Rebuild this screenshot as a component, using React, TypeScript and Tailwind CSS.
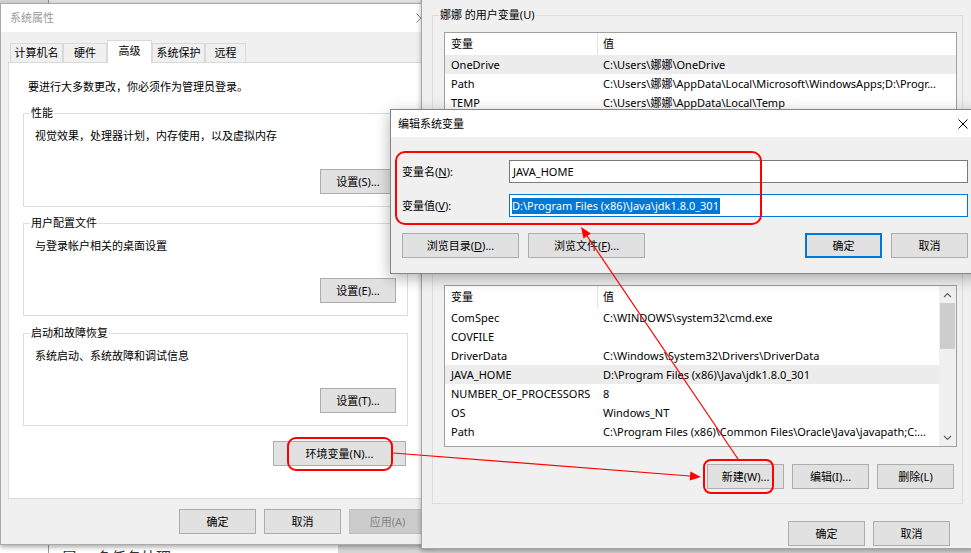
import React from "react";

type Row = { name: string; value: string; active?: boolean };

const userVars: Row[] = [
  { name: "OneDrive", value: "C:\\Users\\娜娜\\OneDrive", active: true },
  { name: "Path", value: "C:\\Users\\娜娜\\AppData\\Local\\Microsoft\\WindowsApps;D:\\Progr..." },
  { name: "TEMP", value: "C:\\Users\\娜娜\\AppData\\Local\\Temp" },
];

const systemVars: Row[] = [
  { name: "ComSpec", value: "C:\\WINDOWS\\system32\\cmd.exe" },
  { name: "COVFILE", value: "" },
  { name: "DriverData", value: "C:\\Windows\\System32\\Drivers\\DriverData" },
  { name: "JAVA_HOME", value: "D:\\Program Files (x86)\\Java\\jdk1.8.0_301", active: true },
  { name: "NUMBER_OF_PROCESSORS", value: "8" },
  { name: "OS", value: "Windows_NT" },
  { name: "Path", value: "C:\\Program Files (x86)\\Common Files\\Oracle\\Java\\javapath;C:..." },
];

const tabs = [
  { label: "计算机名", width: "w-[53px]" },
  { label: "硬件", width: "w-[44px]" },
  { label: "高级", width: "w-[45px]", active: true },
  { label: "系统保护", width: "w-[53px]" },
  { label: "远程", width: "w-[41px]" },
];

function CloseIcon({ className = "" }: { className?: string }) {
  return (
    <svg viewBox="0 0 10 10" className={className}>
      <path d="M0.5 0.5 9.5 9.5 M9.5 0.5 0.5 9.5" stroke="currentColor" strokeWidth="1" fill="none" />
    </svg>
  );
}

function Button({
  children,
  className = "",
  variant = "normal",
}: {
  children: React.ReactNode;
  className?: string;
  variant?: "normal" | "default" | "disabled";
}) {
  const look =
    variant === "default"
      ? "border-2 border-[#0078d7] bg-[#e1e1e1] text-black"
      : variant === "disabled"
        ? "border border-[#bfbfbf] bg-[#cccccc] text-[#838383]"
        : "border border-[#adadad] bg-[#e1e1e1] text-black";
  return (
    <div className={`flex h-[25px] shrink-0 items-center justify-center whitespace-nowrap text-[11px] ${look} ${className}`}>
      {children}
    </div>
  );
}

function GroupBox({
  label,
  labelBg,
  className = "",
  children,
}: {
  label: string;
  labelBg: string;
  className?: string;
  children: React.ReactNode;
}) {
  return (
    <div className={`relative shrink-0 border border-[#dcdcdc] ${className}`}>
      <span className={`absolute -top-[9px] left-[6px] px-[1px] leading-[16px] whitespace-nowrap ${labelBg}`}>{label}</span>
      {children}
    </div>
  );
}

function Scrollbar() {
  return (
    <div className="flex w-[17px] shrink-0 flex-col bg-[#f0f0f0]">
      <div className="flex h-[17px] items-center justify-center">
        <svg width="9" height="6" viewBox="0 0 9 6">
          <path d="M1 5 4.5 1.5 8 5" stroke="#606060" strokeWidth="1.1" fill="none" />
        </svg>
      </div>
      <div className="mx-[1px] h-[46px] bg-[#cdcdcd]" />
      <div className="mt-auto flex h-[17px] items-center justify-center">
        <svg width="9" height="6" viewBox="0 0 9 6">
          <path d="M1 1 4.5 4.5 8 1" stroke="#606060" strokeWidth="1.1" fill="none" />
        </svg>
      </div>
    </div>
  );
}

function VarList({ rows, className = "", scroll = false }: { rows: Row[]; className?: string; scroll?: boolean }) {
  return (
    <div className={`flex w-[513px] shrink-0 overflow-hidden border border-[#a0a0a0] bg-white ${className}`}>
      <div className="flex min-w-0 flex-1 flex-col">
        <div className="flex h-[22px] shrink-0 items-center">
          <div className="flex h-full w-[153px] shrink-0 items-center border-r border-[#e5e5e5] pl-[6px]">变量</div>
          <div className="pl-[5px]">值</div>
        </div>
        {rows.map((row) => (
          <div
            key={row.name}
            className={`flex h-[19px] shrink-0 items-center whitespace-nowrap ${row.active ? "bg-[#ececec]" : ""}`}
          >
            <div className="w-[153px] shrink-0 overflow-hidden pl-[6px]">{row.name}</div>
            <div className="min-w-0 flex-1 overflow-hidden pl-[5px]">{row.value}</div>
          </div>
        ))}
      </div>
      {scroll && <Scrollbar />}
    </div>
  );
}

function SystemProperties() {
  const groups = [
    { label: "性能", text: "视觉效果，处理器计划，内存使用，以及虚拟内存", button: "设置(S)...", gap: "mt-[18px]" },
    { label: "用户配置文件", text: "与登录帐户相关的桌面设置", button: "设置(E)...", gap: "mt-[16px]" },
    { label: "启动和故障恢复", text: "系统启动、系统故障和调试信息", button: "设置(T)...", gap: "mt-[17px]" },
  ];
  return (
    <div className="absolute left-0 top-[3px] flex h-[542px] w-[436px] flex-col border border-[#aaaaaa] bg-[#f0f0f0] shadow-[0_2px_5px_rgba(0,0,0,0.35)]">
      <div className="flex h-[28px] shrink-0 items-center justify-between bg-white px-[9px]">
        <span className="text-[#9a9a9a]">系统属性</span>
        <CloseIcon className="h-[10px] w-[10px] text-[#8a8a8a]" />
      </div>
      <div className="flex h-[30px] shrink-0 items-end pl-[9px]">
        {tabs.map((tab) =>
          tab.active ? (
            <div
              key={tab.label}
              className={`relative z-10 -mb-px flex h-[23px] items-center justify-center border border-b-0 border-[#d9d9d9] bg-white pb-[2px] ${tab.width}`}
            >
              {tab.label}
            </div>
          ) : (
            <div
              key={tab.label}
              className={`flex h-[19px] items-center justify-center border border-b-0 border-[#d9d9d9] bg-[#f0f0f0] ${tab.width}`}
            >
              {tab.label}
            </div>
          ),
        )}
      </div>
      <div className="mx-[7px] flex h-[437px] w-[420px] shrink-0 flex-col border border-[#d9d9d9] bg-white pl-[14px] pt-[16px]">
        <p className="pl-[5px]">要进行大多数更改，你必须作为管理员登录。</p>
        {groups.map((g, i) => (
          <GroupBox
            key={g.label}
            label={g.label}
            labelBg="bg-white"
            className={`flex w-[385px] flex-col pb-[12px] pl-[11px] pr-[11px] pt-[14px] ${g.gap} ${i === 0 ? "h-[94px]" : "h-[93px]"}`}
          >
            <p>{g.text}</p>
            <Button className="mt-auto w-[76px] self-end">{g.button}</Button>
          </GroupBox>
        ))}
        <Button className="ml-[250px] mt-[15px] w-[133px]">环境变量(N)...</Button>
      </div>
      <div className="mt-[10px] flex gap-[8px] pl-[178px]">
        <Button className="w-[77px]">确定</Button>
        <Button className="w-[77px]">取消</Button>
        <Button className="w-[77px]" variant="disabled">应用(A)</Button>
      </div>
    </div>
  );
}

function EnvironmentVariables() {
  return (
    <div className="absolute left-[421px] top-0 flex h-[549px] w-[555px] flex-col border-b border-l border-[#a5a5a5] bg-[#f0f0f0] pl-[10px] pt-[15px] shadow-[0_2px_5px_rgba(0,0,0,0.3)]">
      <GroupBox label="娜娜 的用户变量(U)" labelBg="bg-[#f0f0f0]" className="flex h-[237px] w-[531px] flex-col pl-[11px] pr-[5px] pt-[16px]">
        <VarList rows={userVars} className="h-[170px]" />
        <div className="mt-[9px] flex gap-[8px] pl-[263px]">
          <Button className="w-[77px]">新建(N)...</Button>
          <Button className="w-[77px]">编辑(E)...</Button>
          <Button className="w-[77px]">删除(D)</Button>
        </div>
      </GroupBox>
      <GroupBox label="系统变量(S)" labelBg="bg-[#f0f0f0]" className="mt-[14px] flex h-[238px] w-[531px] flex-col pl-[11px] pr-[5px] pt-[18px]">
        <VarList rows={systemVars} className="h-[162px]" scroll />
        <div className="mt-[17px] flex gap-[8px] pl-[263px]">
          <Button className="w-[77px]">新建(W)...</Button>
          <Button className="w-[77px]">编辑(I)...</Button>
          <Button className="w-[77px]">删除(L)</Button>
        </div>
      </GroupBox>
      <div className="mt-[17px] flex gap-[8px] pl-[356px]">
        <Button className="w-[77px]">确定</Button>
        <Button className="w-[77px]">取消</Button>
      </div>
    </div>
  );
}

function EditVariable() {
  return (
    <div className="absolute left-[390px] top-[109px] flex h-[165px] w-[592px] flex-col border border-[#858585] bg-[#f0f0f0] shadow-[0_4px_14px_rgba(0,0,0,0.3)]">
      <div className="flex h-[27px] shrink-0 items-center justify-between bg-white pl-[7px] pr-[13px]">
        <span>编辑系统变量</span>
        <CloseIcon className="h-[10px] w-[10px] text-black" />
      </div>
      <div className="flex flex-col pl-[11px] pt-[23px]">
        <div className="flex h-[23px] items-center">
          <span className="w-[107px] shrink-0">
            变量名(<u>N</u>):
          </span>
          <div className="flex h-[23px] w-[459px] items-center border border-[#7a7a7a] bg-white pl-[3px]">JAVA_HOME</div>
        </div>
        <div className="mt-[11px] flex h-[23px] items-center">
          <span className="w-[107px] shrink-0">
            变量值(<u>V</u>):
          </span>
          <div className="flex h-[23px] w-[459px] items-center border border-[#0078d7] bg-white pl-[2px]">
            <span className="bg-[#0078d7] pr-px text-white">D:\Program Files (x86)\Java\jdk1.8.0_301</span>
          </div>
        </div>
        <div className="mt-[16px] flex">
          <Button className="w-[117px]">
            浏览目录(<u>D</u>)...
          </Button>
          <Button className="ml-[9px] w-[117px]">
            浏览文件(<u>F</u>)...
          </Button>
          <Button className="ml-[160px] w-[77px]" variant="default">
            确定
          </Button>
          <Button className="ml-[9px] w-[77px]">取消</Button>
        </div>
      </div>
    </div>
  );
}

function BackgroundWindow() {
  return (
    <div className="absolute left-0 top-[540px] flex h-[20px] w-[338px] bg-white">
      <div className="ml-[48px] h-full w-px bg-[#9a9a9a]" />
      <span className="ml-[13px] mt-[7px] text-[15px] leading-[20px] text-[#333]">冒、 多任务处理</span>
    </div>
  );
}

export default function App() {
  return (
    <div className="relative h-[553px] w-[971px] overflow-hidden bg-[#d6d6d6] font-['Noto_Sans','Noto_Sans_CJK_SC',sans-serif] text-[11px] leading-[16px] text-black">
      <div className="absolute left-[48px] top-0 h-[4px] w-[372px] border-l border-[#8a8a8a] bg-[#e4e4e4]" />
      <BackgroundWindow />
      <SystemProperties />
      <EnvironmentVariables />
      <EditVariable />

      {/* red annotations */}
      <div className="absolute left-[287px] top-[437px] h-[34px] w-[106px] rounded-[9px] border-2 border-[#ff0000]" />
      <div className="absolute left-[395px] top-[151px] h-[74px] w-[367px] rounded-[10px] border-2 border-[#ff0000]" />
      <div className="absolute left-[703px] top-[459px] h-[35px] w-[71px] rounded-[8px] border-2 border-[#ff0000]" />
      <svg className="pointer-events-none absolute left-0 top-0" width="971" height="553" viewBox="0 0 971 553">
        <line x1="393" y1="453" x2="690" y2="476" stroke="#ff0000" strokeWidth="1.2" />
        <polygon points="701,477 690.4,471.6 689.7,480.6" fill="#ff0000" />
        <line x1="738" y1="459" x2="587" y2="236" stroke="#ff0000" strokeWidth="1.2" />
        <polygon points="581,227 590.9,233.6 583.5,238.6" fill="#ff0000" />
      </svg>
    </div>
  );
}
